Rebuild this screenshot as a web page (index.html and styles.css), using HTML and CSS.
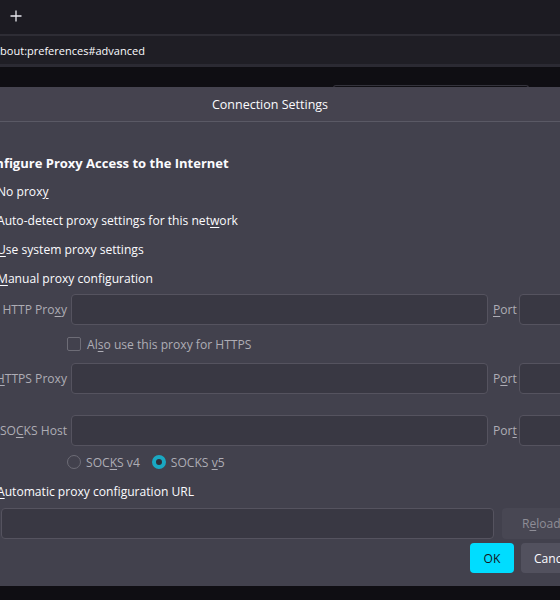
FILE: index.html
```html
<!DOCTYPE html>
<html>
<head>
<meta charset="utf-8">
<link rel="stylesheet" href="styles.css">
</head>
<body>
<div class="tabbar">
  <svg class="plus" width="12" height="12" viewBox="0 0 12 12"><path d="M6 0.5V11.5M0.5 6H11.5" stroke="#e8e8ee" stroke-width="1.3" fill="none"/></svg>
</div>
<div class="sep"></div>
<div class="urlbar"><span class="url">about:preferences#advanced</span></div>
<div class="sep2"></div>
<div class="backdrop"><div class="ghost"></div></div>
<div class="dialog">
  <div class="titlebar">Connection Settings</div>
  <div class="content">
    <div class="heading">Configure Proxy Access to the Internet</div>
    <div class="row radio-row"><span class="radio"></span><span>No prox<u>y</u></span></div>
    <div class="row radio-row"><span class="radio"></span><span>Auto-detect proxy settings for this net<u>w</u>ork</span></div>
    <div class="row radio-row"><span class="radio"></span><span><u>U</u>se system proxy settings</span></div>
    <div class="row radio-row"><span class="radio"></span><span><u>M</u>anual proxy configuration</span></div>

    <div class="row field-row first">
      <span class="flabel">HTTP Pro<u>x</u>y</span>
      <span class="input host"></span>
      <span class="plabel"><u>P</u>ort</span>
      <span class="input port"></span>
    </div>
    <div class="row check-row">
      <span class="checkbox"></span><span class="dim">Al<u>s</u>o use this proxy for HTTPS</span>
    </div>
    <div class="row field-row">
      <span class="flabel"><u>H</u>TTPS Proxy</span>
      <span class="input host"></span>
      <span class="plabel">P<u>o</u>rt</span>
      <span class="input port"></span>
    </div>
    <div class="row field-row socks">
      <span class="flabel">SO<u>C</u>KS Host</span>
      <span class="input host"></span>
      <span class="plabel">Por<u>t</u></span>
      <span class="input port"></span>
    </div>
    <div class="row socks-row">
      <span class="sradio"></span><span class="dim">SOC<u>K</u>S v4</span>
      <span class="sradio on"></span><span class="dim">SOCKS <u>v</u>5</span>
    </div>
    <div class="row auto-row"><span class="radio"></span><span><u>A</u>utomatic proxy configuration URL</span></div>
    <div class="row url-row">
      <span class="input urlinput"></span>
      <span class="reload">R<u>e</u>load</span>
    </div>
    <div class="row btn-row">
      <span class="btn ok">OK</span>
      <span class="btn cancel">Cancel</span>
    </div>
  </div>
</div>
<div class="bottom"></div>
</body>
</html>
```

FILE: styles.css
```css
html, body {
  margin: 0;
  padding: 0;
  background: #0f0e13;
  overflow: hidden;
  width: 560px;
  height: 600px;
  font-family: "Open Sans", "Noto Sans", sans-serif;
  font-size: 12.1px;
  color: #fbfbfe;
}
u { text-underline-offset: 2px; text-decoration-thickness: 1px; }

.tabbar {
  height: 34px;
  background: #1c1b22;
  display: flex;
  align-items: center;
}
.plus { margin-left: 10px; margin-top: -2px; }
.sep { height: 2px; background: #2e2d35; }
.urlbar {
  height: 28px;
  background: #1f1e25;
  display: flex;
  align-items: center;
}
.url { margin-left: -6px; font-size: 11px; white-space: nowrap; }
.sep2 { height: 3px; background: #2b2a33; }
.backdrop { height: 20px; background: #0f0e13; display: flex; }
.ghost {
  margin-left: 333px;
  margin-top: 18px;
  width: 194px;
  height: 2px;
  border: 1px solid #34333c;
  border-bottom: none;
  border-radius: 4px 4px 0 0;
}

.dialog {
  margin-left: -40px;
  width: 620px;
  height: 499px;
  background: #42414d;
  display: flex;
  flex-direction: column;
}
.titlebar {
  height: 34px;
  background: #45434f;
  border-bottom: 1px solid #5a5965;
  display: flex;
  align-items: center;
  justify-content: center;
  font-size: 12.5px;
}
.content {
  padding: 27px 0 0 19px;
  display: flex;
  flex-direction: column;
}
.row { display: flex; align-items: center; white-space: nowrap; }
.row > * { flex-shrink: 0; }
.heading {
  height: 28px;
  display: flex;
  align-items: center;
  font-weight: 700;
  font-size: 13px;
  white-space: nowrap;
}
.radio-row { height: 29px; gap: 4px; }
.radio {
  width: 14px;
  height: 14px;
  border-radius: 50%;
  border: 1px solid #8f8f9d;
  box-sizing: border-box;
}
.field-row { height: 32px; }
.field-row.first { height: 33px; }
.field-row.socks { margin-top: 20px; }
.flabel {
  width: 92px;
  padding-right: 4px;
  box-sizing: border-box;
  text-align: right;
  color: #aeadb5;
}
.plabel {
  width: 31px;
  padding-left: 5px;
  box-sizing: border-box;
  color: #aeadb5;
}
.input {
  height: 31px;
  box-sizing: border-box;
  background: #393843;
  border: 1px solid #55535f;
  border-radius: 4px;
}
.host { width: 417px; }
.port { width: 80px; }
.check-row { height: 36px; padding-left: 88px; gap: 6px; }
.checkbox {
  width: 14px;
  height: 14px;
  box-sizing: border-box;
  border: 1px solid #6d6c76;
  border-radius: 2px;
}
.dim { color: #aeadb5; }
.socks-row { height: 32px; padding-left: 88px; }
.sradio {
  width: 14px;
  height: 14px;
  box-sizing: border-box;
  border-radius: 50%;
  border: 1px solid #6d6c76;
  margin-right: 5px;
}
.sradio.on {
  border: 4px solid #1aa8c2;
  background: #2f2e38;
  margin-left: 12px;
}
.auto-row { height: 26px; gap: 4px; }
.url-row { height: 31px; margin-top: 4px; padding-left: 22px; gap: 8px; }
.urlinput { width: 493px; }
.reload {
  height: 31px;
  width: 100px;
  box-sizing: border-box;
  padding-left: 20px;
  background: #484753;
  border-radius: 4px;
  color: #8e8d96;
  display: flex;
  align-items: center;
}
.btn-row { height: 30px; margin-top: 4px; padding-left: 491px; gap: 7px; }
.btn {
  height: 30px;
  border-radius: 4px;
  display: flex;
  align-items: center;
  justify-content: center;
  box-sizing: border-box;
}
.ok { width: 44px; background: #00ddff; color: #15141a; }
.cancel { padding: 0 13px; background: #52515e; color: #fbfbfe; }
.bottom { height: 20px; background: #0f0e13; }
```
